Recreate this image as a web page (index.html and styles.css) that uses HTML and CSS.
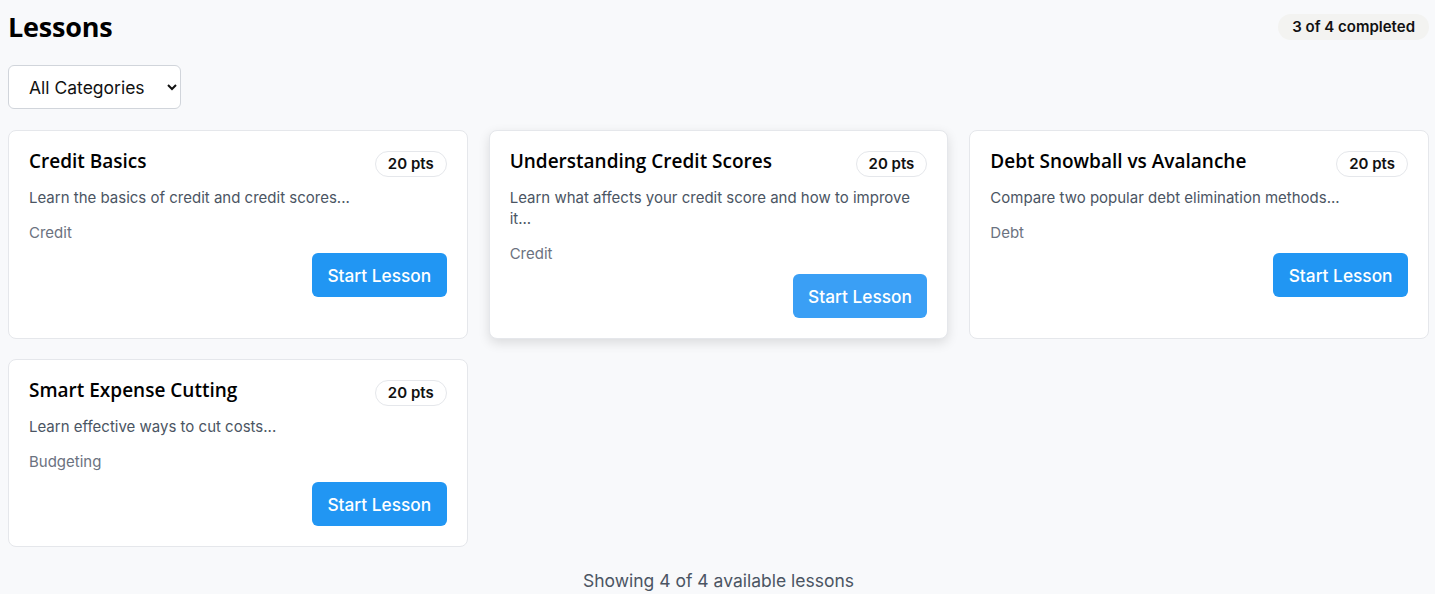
FILE: index.html
```html
<!DOCTYPE html>
<html lang="en">
<head>
<meta charset="utf-8">
<title>Lessons</title>
<link rel="stylesheet" href="styles.css">
</head>
<body>
<main class="page">
  <header class="page-header">
    <h1 class="page-title">Lessons</h1>
    <span class="progress-badge">3 of 4 completed</span>
  </header>

  <div class="filters">
    <select class="category-select">
      <option>All Categories</option>
      <option>Credit</option>
      <option>Debt</option>
      <option>Budgeting</option>
    </select>
  </div>

  <section class="lesson-grid">
    <article class="lesson-card">
      <div class="lesson-head">
        <h2 class="lesson-title">Credit Basics</h2>
        <span class="pts">20 pts</span>
      </div>
      <p class="lesson-desc">Learn the basics of credit and credit scores...</p>
      <p class="lesson-cat">Credit</p>
      <div class="lesson-actions"><button class="start-btn">Start Lesson</button></div>
    </article>

    <article class="lesson-card is-hover">
      <div class="lesson-head">
        <h2 class="lesson-title">Understanding Credit Scores</h2>
        <span class="pts">20 pts</span>
      </div>
      <p class="lesson-desc">Learn what affects your credit score and how to improve it...</p>
      <p class="lesson-cat">Credit</p>
      <div class="lesson-actions"><button class="start-btn">Start Lesson</button></div>
    </article>

    <article class="lesson-card">
      <div class="lesson-head">
        <h2 class="lesson-title">Debt Snowball vs Avalanche</h2>
        <span class="pts">20 pts</span>
      </div>
      <p class="lesson-desc">Compare two popular debt elimination methods...</p>
      <p class="lesson-cat">Debt</p>
      <div class="lesson-actions"><button class="start-btn">Start Lesson</button></div>
    </article>

    <article class="lesson-card">
      <div class="lesson-head">
        <h2 class="lesson-title">Smart Expense Cutting</h2>
        <span class="pts">20 pts</span>
      </div>
      <p class="lesson-desc">Learn effective ways to cut costs...</p>
      <p class="lesson-cat">Budgeting</p>
      <div class="lesson-actions"><button class="start-btn">Start Lesson</button></div>
    </article>
  </section>

  <p class="summary">Showing 4 of 4 available lessons</p>
</main>
</body>
</html>
```

FILE: styles.css
```css
* { box-sizing: border-box; }

html, body {
  margin: 0;
  padding: 0;
  background: #f8f9fb;
}

body {
  font-family: Inter, "Liberation Sans", sans-serif;
  color: #111;
}

.page {
  padding: 8px 6px 8px 8px;
}

.page-header {
  display: flex;
  align-items: center;
  justify-content: space-between;
  height: 38px;
}

.page-title {
  margin: 0;
  font-family: "Open Sans", Inter, sans-serif;
  font-weight: 700;
  font-size: 27px;
  line-height: 38px;
  color: #000;
  letter-spacing: -0.2px;
}

.progress-badge {
  background: #f3f3f1;
  border-radius: 999px;
  padding: 4px 14px;
  font-size: 15px;
  line-height: 18px;
  font-weight: 600;
  color: #111;
}

.filters {
  margin-top: 19px;
  margin-bottom: 21px;
}

.category-select {
  width: 173px;
  height: 44px;
  font-family: Inter, sans-serif;
  font-size: 17.5px;
  color: #111;
  background: #fff;
  border: 1px solid #d1d5db;
  border-radius: 6px;
  padding: 0 10px 0 16px;
}

.lesson-grid {
  display: grid;
  grid-template-columns: repeat(3, 1fr);
  column-gap: 21px;
  row-gap: 20px;
}

.lesson-card {
  background: #fff;
  border: 1px solid #e5e7eb;
  border-radius: 8px;
  padding: 20px;
}

.lesson-card.is-hover {
  box-shadow: 0 4px 12px rgba(0, 0, 0, 0.12);
}

.lesson-head {
  display: flex;
  justify-content: space-between;
  align-items: flex-start;
  gap: 12px;
  height: 26px;
}

.lesson-title {
  margin: 0;
  font-family: "Open Sans", Inter, sans-serif;
  font-weight: 600;
  font-size: 19px;
  line-height: 20px;
  color: #000;
}

.pts {
  flex: none;
  border: 1px solid #e5e7eb;
  border-radius: 999px;
  padding: 0 12px;
  height: 26px;
  line-height: 24px;
  font-size: 15px;
  font-weight: 600;
  color: #111;
}

.lesson-desc {
  margin: 10px 0 0;
  font-size: 15px;
  line-height: 21px;
  color: #4b5563;
}

.lesson-cat {
  margin: 14px 0 0;
  font-size: 15px;
  line-height: 21px;
  color: #6b7280;
}

.lesson-actions {
  display: flex;
  justify-content: flex-end;
  margin-top: 10px;
}

.start-btn {
  height: 44px;
  padding: 0 15.5px;
  border: none;
  border-radius: 6px;
  background: #2196f3;
  color: #fff;
  font-family: Inter, sans-serif;
  font-size: 17.3px;
  font-weight: 500;
  cursor: pointer;
}

.lesson-card.is-hover .start-btn {
  background: #3a9ff5;
}

.summary {
  margin: 22px 0 0;
  text-align: center;
  font-size: 17.5px;
  line-height: 24px;
  color: #4b5563;
}
```
